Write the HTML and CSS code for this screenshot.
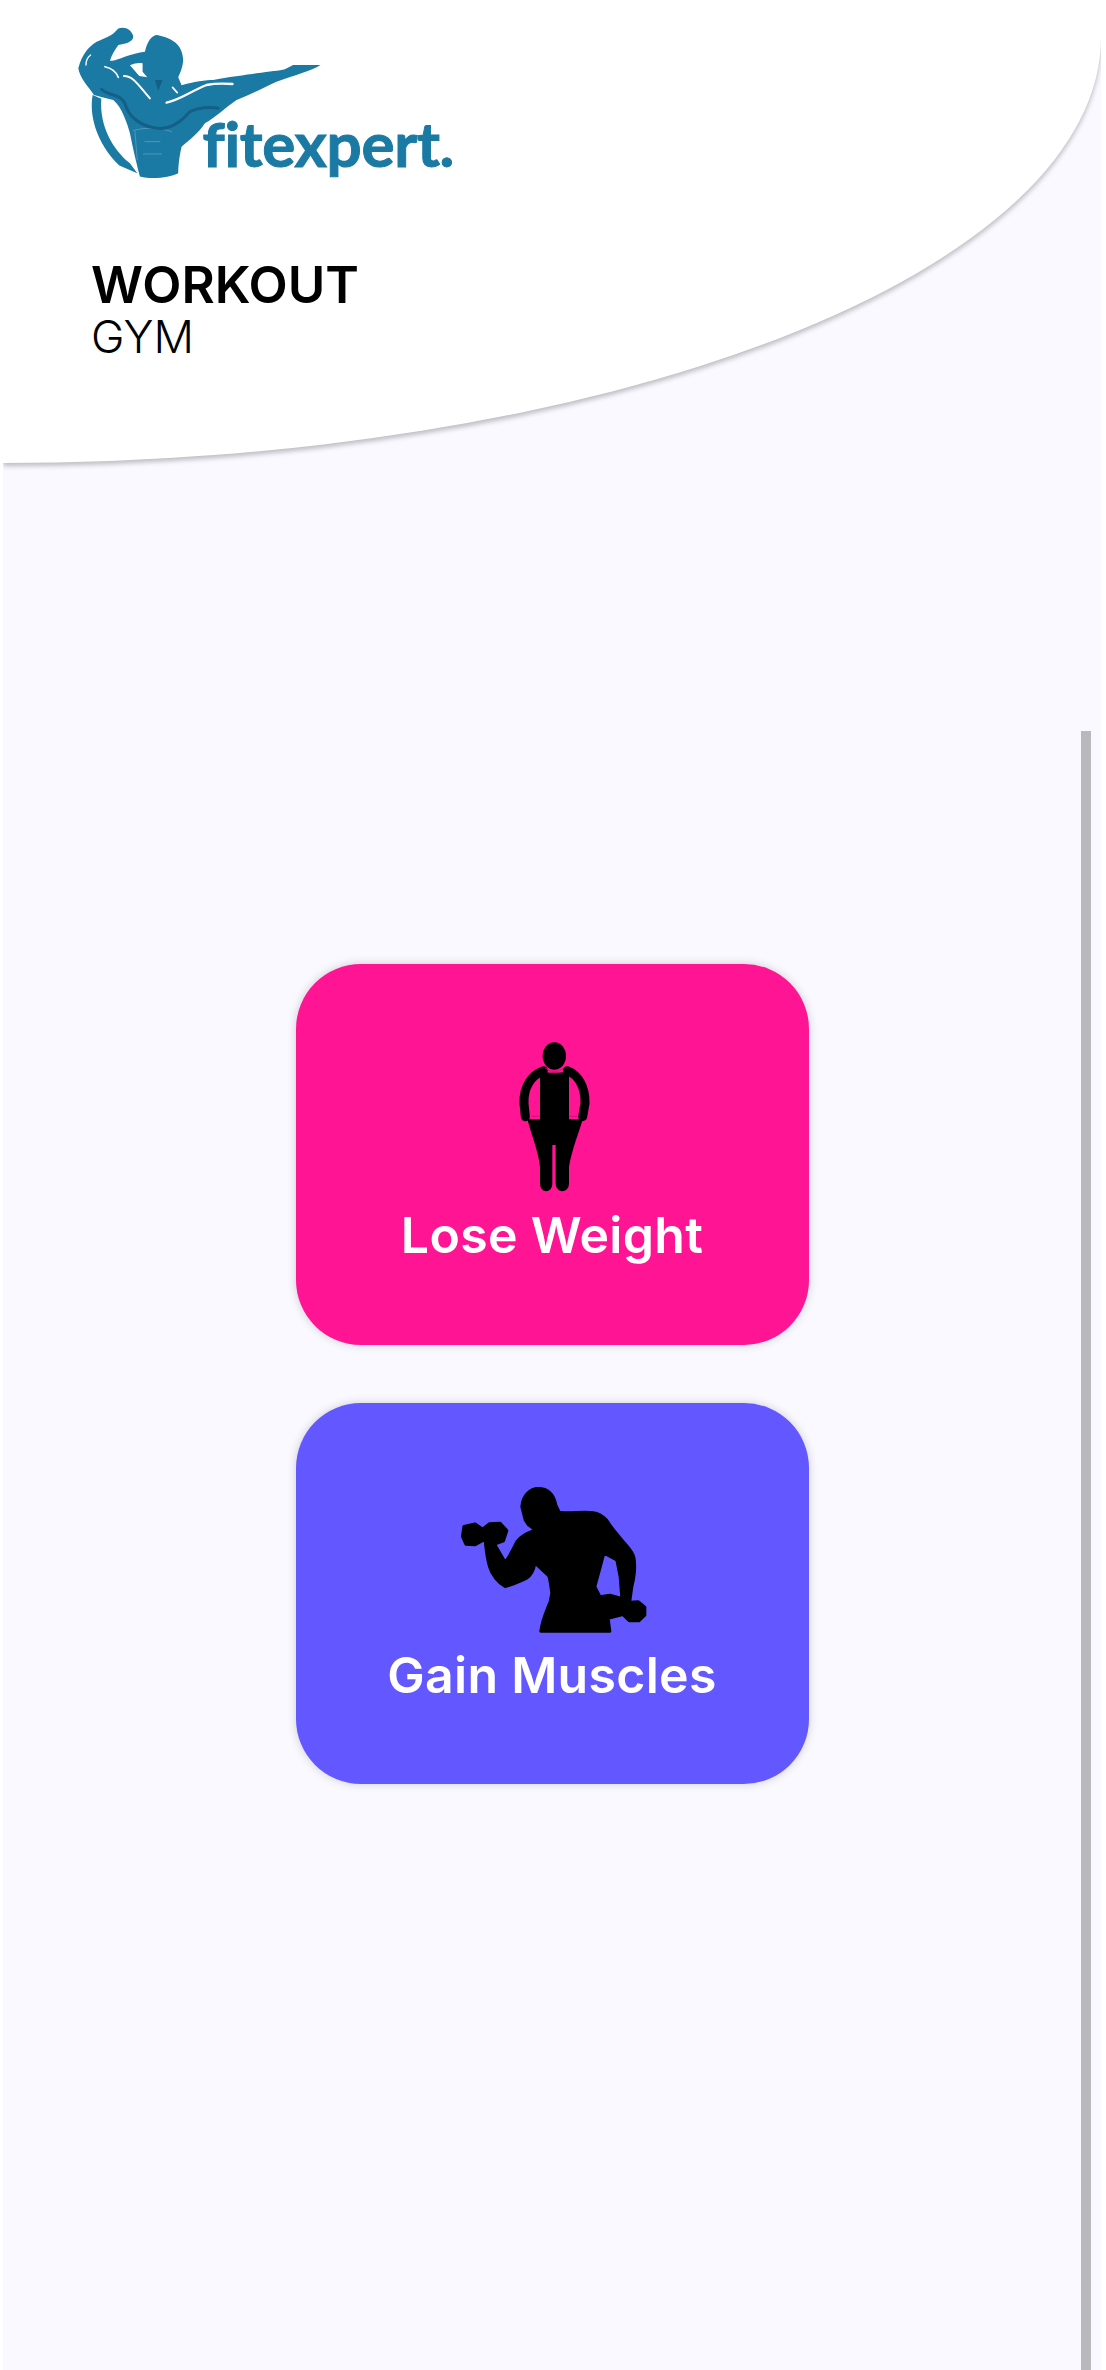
FILE: index.html
```html
<!DOCTYPE html>
<html lang="en">
<head>
	<meta charset="UTF-8">
	<meta name="viewport" content="width=device-width, initial-scale=1.0">
	<title>Workout Gym</title>
	<link rel="stylesheet" href="styles.css">
</head>
<body>
	<div class="app">
		<header class="top">
			<svg class="logo" viewBox="0 0 1300 600">
				<path fill="#1a7aa3" d="M205,85 C225,78 245,88 250,108 C250,122 238,130 205,135 C195,150 185,165 180,182 C200,185 220,165 285,155 C292,125 305,105 322,105 C370,115 398,135 400,180 C398,205 390,220 385,232 L395,256 C430,245 470,240 490,240 C530,232 590,225 620,220 C660,215 690,212 705,208 L730,195 L812,195 C790,210 730,228 680,245 C650,258 610,280 560,300 C530,320 500,350 465,370 C450,395 420,420 395,440 C388,470 385,500 385,520 C360,532 310,540 270,530 C262,500 250,450 240,400 C232,370 215,320 190,300 C170,295 150,290 132,285 C115,260 90,235 85,205 C95,165 115,140 140,125 C160,115 185,110 205,85 Z"/>
				<!-- crescent under the arm -->
				<path fill="#1a7aa3" d="M128,285 C118,340 135,425 208,497 L262,520 L240,490 C190,450 148,380 154,296 Z"/>
				<g fill="none" stroke="#fff" stroke-linecap="round">
					<path stroke-width="4" d="M108,195 C108,180 115,170 122,165"/>
					<path stroke-width="5" d="M165,200 C185,205 200,215 205,232"/>
					<path stroke-width="6" d="M222,228 C250,228 265,255 300,295"/>
					<path stroke-width="7" d="M350,308 C390,300 420,275 470,255 C495,250 520,250 548,252"/>
					<path stroke-width="5" d="M368,262 L382,278"/>
					<path stroke-width="1.5" stroke-opacity=".45" d="M250,392 C280,382 330,382 365,395 M255,395 L262,480 M285,425 H330 M280,462 H335"/>
				</g>
				<path fill="#fff" d="M240,196 C255,190 265,188 278,190 L278,215 L292,232 L268,228 Z"/>
				<path fill="#135f85" d="M315,240 L338,240 L325,272 Z"/>
				<path fill="none" stroke="#135f85" stroke-width="9" stroke-linecap="round" d="M155,268 C180,290 210,280 225,310 C235,350 270,375 310,383 C350,392 385,375 420,335 C445,322 480,320 505,325"/>
				<text class="logo-text" x="458" y="500">fitexpert.</text>
			</svg>

			<div class="title">
				<div class="title-main">WORKOUT</div>
				<div class="title-sub">GYM</div>
			</div>
		</header>

		<!-- fake scrollbar -->
		<div class="scroll-thumb"></div>

		<main class="cards">
			<a class="card card-lose" href="#">
				<svg class="icon icon-lose" viewBox="0 0 360 540">
					<ellipse cx="193" cy="108" rx="35" ry="41" fill="#000"/>
					<path fill="#000" d="M150,152 C165,160 220,160 237,152 V310 H150 Z"/>
					<path fill="none" stroke="#000" stroke-width="27" stroke-linecap="round" d="M160,152 C125,165 100,200 102,250 L106,290 M232,152 C265,165 286,200 285,250 L278,290"/>
					<path fill="#000" d="M112,298 H278 C268,335 245,390 237,440 V490 C237,522 197,522 197,490 V375 H187 V490 C187,522 150,522 150,490 V440 C145,395 125,345 112,298 Z"/>
					<path fill="none" stroke="#d0127a" stroke-width="3" d="M166,143 C175,158 212,158 221,143 M126,289 H150 M238,289 H264"/>
				</svg>
				<span class="card-label">Lose Weight</span>
			</a>
			<a class="card card-gain" href="#">
				<svg class="icon icon-gain" viewBox="0 0 600 510">
					<path fill="#000" fill-rule="evenodd" stroke="#000" stroke-width="8" stroke-linejoin="round" d="M265,55 C295,55 312,75 318,105 L328,126 C360,132 400,122 430,128 C450,130 460,140 470,150 C485,175 505,195 520,215 C535,232 548,245 552,262 C558,290 552,330 546,350 L540,393 L515,435 L475,445 L480,484 L272,484 C276,450 290,420 300,395 L305,370 C302,345 298,325 296,318 L255,280 C252,300 245,315 230,325 C210,335 185,345 165,350 C145,340 125,315 118,290 C112,270 108,245 105,210 L130,215 L165,275 C178,262 188,240 200,215 C215,195 235,188 255,180 L235,165 L225,150 L215,110 C218,75 240,55 265,55 Z M462,250 L450,295 L435,350 L450,380 L480,375 L515,385 L510,320 L500,270 Z"/>
					<!-- dumbbells -->
					<path fill="#000" stroke="#000" stroke-width="10" stroke-linejoin="round" d="M42,170 L75,162 L98,178 L118,162 L150,160 L170,182 L160,212 L128,224 L100,210 L75,224 L48,222 L38,200 Z"/>
					<path fill="#000" stroke="#000" stroke-width="10" stroke-linejoin="round" d="M450,385 L490,382 L530,398 L565,396 L584,412 L584,435 L566,452 L538,452 L518,432 L478,440 L455,430 Z"/>
				</svg>
				<span class="card-label">Gain Muscles</span>
			</a>
		</main>
	</div>
</body>
</html>
```

FILE: styles.css
```css
* {
	box-sizing: border-box;
}

body {
	margin: 0;
	background-color: #fff;
	font-family: Inter, "Liberation Sans", sans-serif;
}

.app {
	position: relative;
	margin: 0 5px 0 3px;
	height: 2370px;
	background-color: #faf9ff;
	overflow: hidden;
}

.top {
	height: 463px;
	padding-left: 47px;
	background-color: #fff;
	border-bottom-right-radius: 1098px 426px;
	box-shadow: 0 3px 5px rgba(0, 0, 0, 0.25);
}

.logo {
	display: block;
	width: 433px;
	height: 200px;
	filter: blur(0.7px);
}

.logo-text {
	font-family: Lato, sans-serif;
	font-weight: 700;
	font-size: 186px;
	letter-spacing: -1px;
	fill: #1a7aa3;
	stroke: #1a7aa3;
	stroke-width: 3px;
}

.title {
	margin: 60px 0 0 41px;
	color: #000;
}

.title-main {
	font-size: 51px;
	line-height: 50px;
	font-weight: 600;
}

.title-sub {
	font-size: 45px;
	line-height: 53px;
	font-weight: 300;
}

.scroll-thumb {
	position: absolute;
	top: 731px;
	right: 10px;
	bottom: 0;
	width: 10px;
	background-color: #b9b8bd;
}

.cards {
	display: flex;
	flex-direction: column;
	align-items: center;
	gap: 58px;
	padding-top: 501px;
}

.card {
	display: flex;
	flex-direction: column;
	align-items: center;
	width: 513px;
	height: 381px;
	border-radius: 65px;
	box-shadow: 0 0 10px rgba(0, 0, 0, 0.18);
	color: #fff;
	text-decoration: none;
}

.card-lose {
	background-color: #ff1493;
}

.card-gain {
	background-color: #6358ff;
}

.icon {
	display: block;
	margin-right: 5px;
	filter: blur(0.7px);
}

.icon-lose {
	width: 120px;
	height: 180px;
	margin-top: 56px;
}

.icon-gain {
	width: 200px;
	height: 170px;
	margin-top: 67px;
}

.card-label {
	margin-top: 5px;
	font-size: 50px;
	line-height: 60px;
	font-weight: 600;
	letter-spacing: 0.3px;
}
```
